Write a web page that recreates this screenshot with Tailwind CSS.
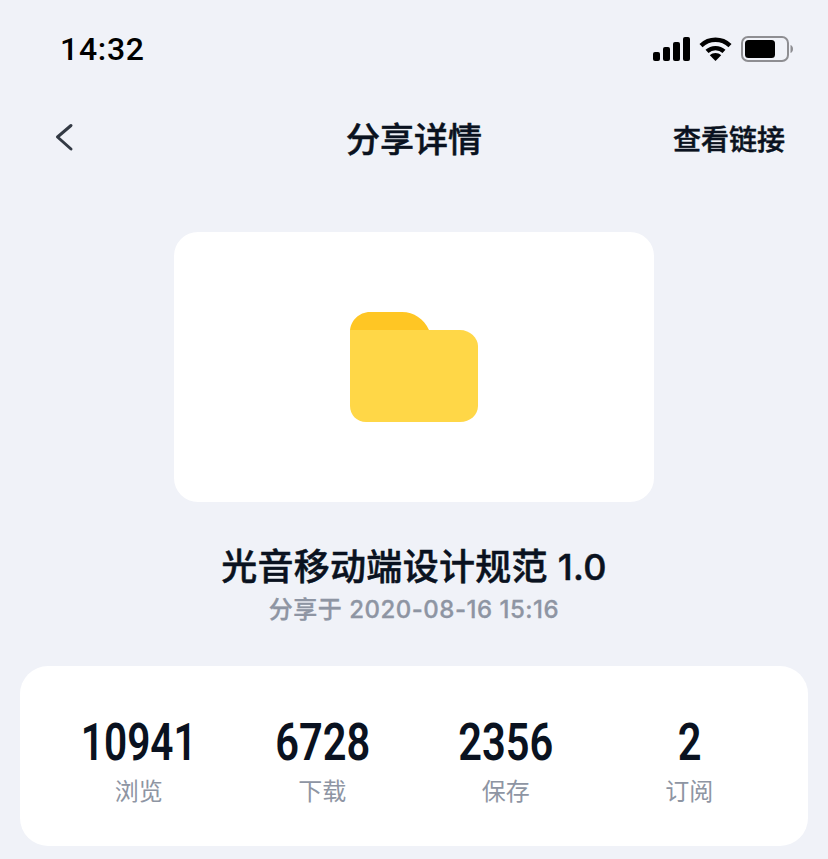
<!DOCTYPE html>
<html lang="zh-CN">
<head>
    <meta charset="UTF-8">
    <title>分享详情</title>
    <script src="https://cdn.jsdelivr.net/npm/@tailwindcss/browser@4"></script>
</head>
<body class="bg-[#f0f2f8] font-['Inter','Noto_Sans_CJK_SC',sans-serif] text-[#0a1220]">
    <div class="w-[828px] h-[859px] overflow-hidden">
        <!-- status bar -->
        <div class="h-[100px] pl-[60px] pr-[35px] pt-[30px] flex justify-between items-start">
            <span class="text-[32px] leading-[38px] font-medium font-['Roboto',sans-serif] text-black tracking-[0.7px]">14:32</span>
            <div class="flex items-center gap-[9px] pt-[6px]">
                <svg width="37" height="24" viewBox="0 0 37 24" fill="#000">
                    <rect x="0" y="15" width="7" height="9" rx="2"/>
                    <rect x="10" y="10" width="7" height="14" rx="2"/>
                    <rect x="20" y="5" width="7" height="19" rx="2"/>
                    <rect x="30" y="0" width="7" height="24" rx="2"/>
                </svg>
                <svg width="33" height="24" viewBox="0 0 33 24" fill="none" stroke="#000" stroke-width="4.4">
                    <path d="M2 8.6C10.2 .8 22.8 .8 31 8.6"/>
                    <path d="M8 14.4C12.8 10 20.2 10 25 14.4"/>
                    <path d="M16.5 24L10.8 18.2C14 15.4 19 15.4 22.2 18.2Z" fill="#000" stroke="none"/>
                </svg>
                <svg width="52" height="26" viewBox="0 0 52 26" fill="none">
                    <rect x="1" y="1" width="46" height="24" rx="6" stroke="#8e8e92" stroke-width="2"/>
                    <rect x="4" y="4" width="30" height="18" rx="3.5" fill="#000"/>
                    <path d="M49.500 9C51 9.600 52 11 52 13S51 16.400 49.500 17Z" fill="#8e8e92"/>
                </svg>
            </div>
        </div>
        <!-- nav -->
        <div class="relative h-[80px] flex items-center justify-center">
            <svg class="absolute left-[54px] top-[22px]" width="20" height="30" viewBox="0 0 20 30" fill="none" stroke="#333a44" stroke-width="3" stroke-linecap="round" stroke-linejoin="round">
                <path d="M17 3.500L3.500 15L17 27"/>
            </svg>
            <span class="text-[34px] leading-[48px] font-medium [-webkit-text-stroke:0.5px_#0a1220]">分享详情</span>
            <span class="absolute right-[43px] top-[20px] text-[28px] leading-[40px] font-medium [-webkit-text-stroke:0.5px_#0a1220]">查看链接</span>
        </div>
        <!-- cover -->
        <div class="mt-[52px] mx-auto w-[480px] h-[270px] bg-white rounded-[24px] flex items-center justify-center">
            <svg width="128" height="110" viewBox="0 0 128 110">
                <path d="M0 20C0 9 9 0 20 0H52C64 0 74 7 79 18H0Z" fill="#ffc624"/>
                <path d="M0 18H110C120 18 128 26 128 34V94C128 103 120 110 110 110H16C7 110 0 103 0 94Z" fill="#ffd747"/>
            </svg>
        </div>
        <!-- title -->
        <div class="mt-[41px] text-center">
            <h1 class="text-[36px] leading-[48px] font-medium tracking-[0.3px] [-webkit-text-stroke:0.5px_#0a1220]">光音移动端设计规范 1.0</h1>
            <p class="mt-[3px] text-[24px] leading-[32px] font-medium tracking-[0.5px] text-[#8e95a3] [-webkit-text-stroke:0.3px_#8e95a3]">分享于 2020-08-16 15:16</p>
        </div>
        <!-- stats -->
        <div class="mt-[40px] mx-[20px] h-[180px] bg-white rounded-[28px] px-[27px] pt-[12px] grid grid-cols-4 items-center">
            <div class="text-center">
                <div class="text-[52px] leading-[54px] font-semibold font-['Roboto',sans-serif] scale-x-[0.78]">10941</div>
                <div class="mt-[6px] text-[24px] leading-[32px] text-[#8e95a3]">浏览</div>
            </div>
            <div class="text-center">
                <div class="text-[52px] leading-[54px] font-semibold font-['Roboto',sans-serif] scale-x-[0.8]">6728</div>
                <div class="mt-[6px] text-[24px] leading-[32px] text-[#8e95a3]">下载</div>
            </div>
            <div class="text-center">
                <div class="text-[52px] leading-[54px] font-semibold font-['Roboto',sans-serif] scale-x-[0.8]">2356</div>
                <div class="mt-[6px] text-[24px] leading-[32px] text-[#8e95a3]">保存</div>
            </div>
            <div class="text-center">
                <div class="text-[52px] leading-[54px] font-semibold font-['Roboto',sans-serif] scale-x-[0.8]">2</div>
                <div class="mt-[6px] text-[24px] leading-[32px] text-[#8e95a3]">订阅</div>
            </div>
        </div>
    </div>
</body>
</html>
